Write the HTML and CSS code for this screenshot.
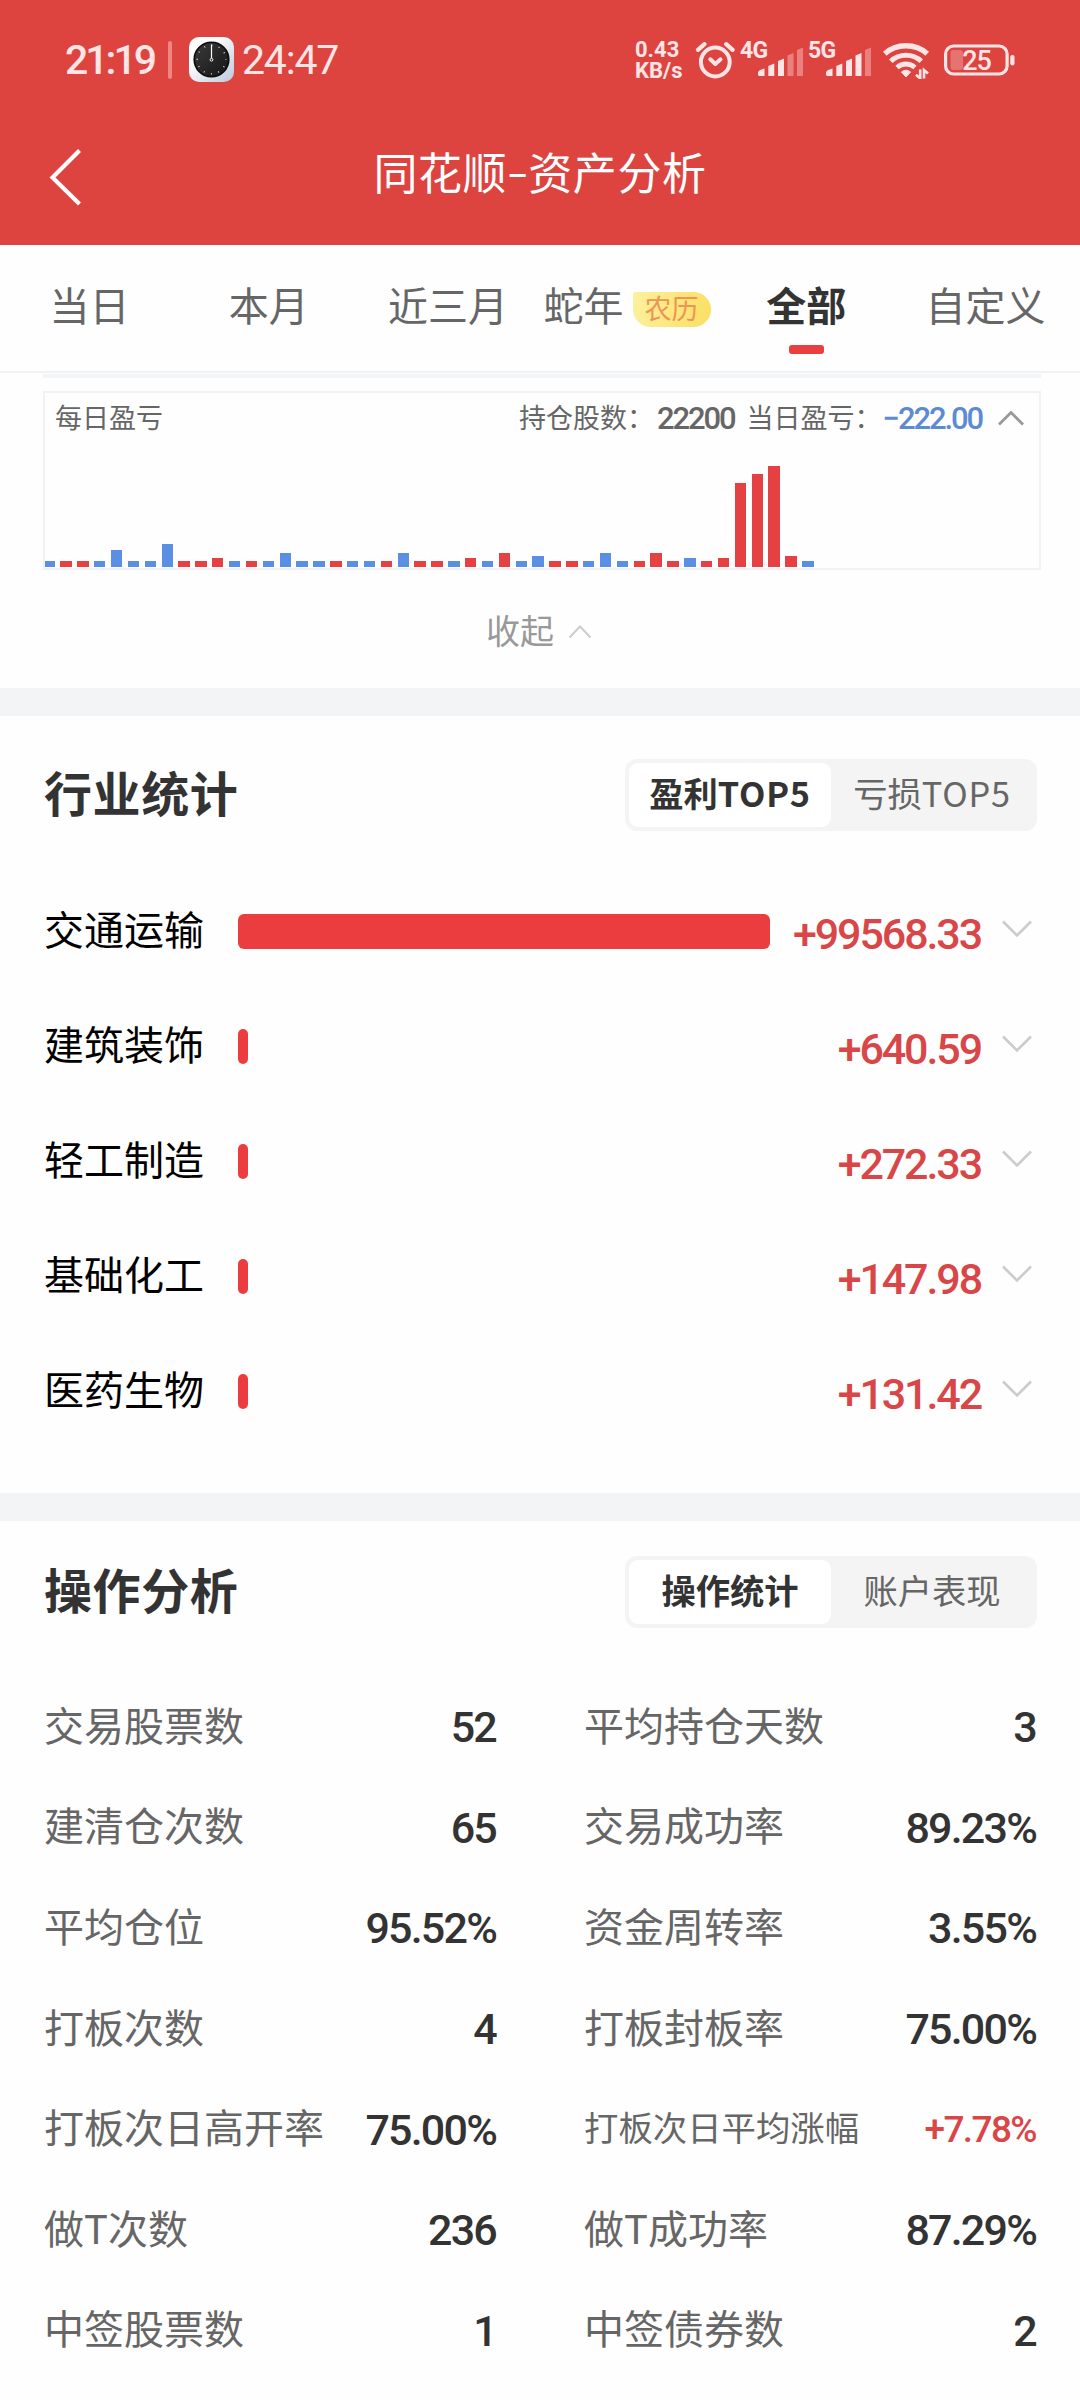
FILE: index.html
```html
<!DOCTYPE html>
<html lang="zh-CN">
<head>
<meta charset="utf-8">
<title>同花顺-资产分析</title>
<link rel="stylesheet" href="styles.css">
</head>
<body>
<header class="header">
  <div class="status">
    <div class="status-left">
      <span class="clock">21:19</span>
      <span class="divider"></span>
      <svg class="app-icon" width="45" height="45" viewBox="0 0 45 45">
        <defs>
          <linearGradient id="tile" x1="0" y1="0" x2="1" y2="1"><stop offset=".3" stop-color="#fff"/><stop offset="1" stop-color="#bcc8da"/></linearGradient>
          <linearGradient id="dial" x1="0" y1="0" x2="1" y2="1"><stop offset="0" stop-color="#3a3a3a"/><stop offset="1" stop-color="#161616"/></linearGradient>
        </defs>
        <rect width="45" height="45" rx="10" fill="url(#tile)"/>
        <circle cx="22.5" cy="22.5" r="17.3" fill="url(#dial)" stroke="#0c0c0c" stroke-width="1.6"/>
        <circle cx="22.5" cy="22.5" r="14.3" fill="none" stroke="#ddd" stroke-width="1.6" stroke-dasharray="0.9 6.588" stroke-dashoffset="0.45"/>
        <path d="M22.5 21.5V7.5" stroke="#fff" stroke-width="1.2"/>
        <circle cx="22.5" cy="22.7" r="1.4" fill="#222" stroke="#fff" stroke-width="1"/>
      </svg>
      <span class="timer">24:47</span>
    </div>
    <div class="status-right">
      <div class="speed"><span>0.43</span><span>KB/s</span></div>
      <svg class="alarm" width="40" height="40" viewBox="0 0 40 40" fill="none" stroke="#ffe5e5" stroke-linecap="round" stroke-linejoin="round">
        <circle cx="20.3" cy="22" r="14.4" stroke-width="4"/>
        <path d="M15.3 19.3L20.3 24L25.5 19.3" stroke-width="4"/>
        <path d="M3 9.8L9.4 4.2M31.2 4.2L37.6 9.8" stroke-width="4.2"/>
      </svg>
      <div class="cell">
        <span class="net">4G</span>
        <svg class="signal" width="46" height="30" viewBox="0 0 46 30" fill="#ffe5e5"><path d="M0 25L2 23L6.5 21.5V29H1L0 28ZM10.3 19L16.3 16.5V29H10.3ZM20 14L26 11.5V29H20Z"/><path opacity=".38" d="M29.5 8.5L35.5 6V29H29.5ZM39 3L45 .5V29H39Z"/></svg>
      </div>
      <div class="cell">
        <span class="net">5G</span>
        <svg class="signal" width="46" height="30" viewBox="0 0 46 30" fill="#ffe5e5"><path d="M0 25L2 23L6.5 21.5V29H1L0 28ZM10.3 19L16.3 16.5V29H10.3ZM20 14L26 11.5V29H20ZM29.5 8.5L35.5 6V29H29.5Z"/><path opacity=".38" d="M39 3L45 .5V29H39Z"/></svg>
      </div>
      <svg class="wifi" width="47" height="38" viewBox="0 0 47 38" fill="none" stroke="#ffe5e5">
        <path d="M1.8 12.8Q10.5 4.8 23 4.8T44.2 12.8" stroke-width="5.4"/>
        <path d="M7.8 20.2Q14 14.2 23 14.2T38.2 20.2" stroke-width="5"/>
        <path d="M14 26.5Q18 23 23 23T32 26.5" stroke-width="4.8"/>
        <path d="M18.4 31Q23 27.4 27.6 31L23 36Z" fill="#ffe5e5"  stroke-width="1" stroke-linejoin="round"/>
        <path d="M37.2 28.5V37.5L33 33.8M41 37.5V29L45 32.5" stroke-width="2.6"/>
      </svg>
      <svg class="battery" width="71" height="32" viewBox="0 0 71 32">
        <rect x="1.6" y="2" width="61.5" height="28" rx="8" fill="none" stroke="#ffe5e5" stroke-width="3.2"/>
        <rect x="66.3" y="11" width="4.2" height="10.5" rx="2" fill="#ffe5e5"/>
        <rect x="6.5" y="6" width="12.5" height="20" rx="3" fill="#fff" opacity=".25"/>
        <text x="32.5" y="25.5" text-anchor="middle" class="battery-text">25</text>
      </svg>
    </div>
  </div>
  <div class="title-bar">
    <svg class="back" width="34" height="58" viewBox="0 0 34 58"><path d="M30.5 2.5L3.5 29.5L30.5 56" fill="none" stroke="#fff" stroke-width="4.2"/></svg>
    <h1 class="title">同花顺<span class="dash">–</span>资产分析</h1>
  </div>
</header>

<nav class="tabs">
  <span class="tab">当日</span>
  <span class="tab">本月</span>
  <span class="tab">近三月</span>
  <span class="tab">蛇年<span class="lunar">农历</span></span>
  <span class="tab active">全部</span>
  <span class="tab">自定义</span>
</nav>

<section class="daily">
  <div class="previous-edge"></div>
  <div class="chart">
    <div class="chart-head">
      <span>每日盈亏</span>
      <div class="chart-info">
        <span>持仓股数：</span><span class="num shares">22200</span>
        <span class="pnl-label">当日盈亏：</span><span class="num pnl">−222.00</span>
        <svg class="caret-up" width="28" height="18" viewBox="0 0 28 18"><path d="M2 15.5L14 3.5L26 15.5" fill="none" stroke="#999" stroke-width="2.8"/></svg>
      </div>
    </div>
    <div class="bars" id="bars"></div>
  </div>
  <div class="collapse"><span>收起</span><svg width="24" height="16" viewBox="0 0 24 16"><path d="M1.5 13.5L12 2.5L22.5 13.5" fill="none" stroke="#ccc" stroke-width="2"/></svg></div>
</section>

<section class="industry">
  <div class="section-head">
    <h2>行业统计</h2>
    <div class="segment"><span class="on">盈利<span class="latin">TOP5</span></span><span>亏损<span class="latin">TOP5</span></span></div>
  </div>
  <div class="ranking" id="ranking"></div>
</section>

<section class="operation">
  <div class="section-head">
    <h2>操作分析</h2>
    <div class="segment"><span class="on">操作统计</span><span>账户表现</span></div>
  </div>
  <div class="stats">
    <div class="stat"><span>交易股票数</span><b>52</b></div>
    <div class="stat"><span>平均持仓天数</span><b>3</b></div>
    <div class="stat"><span>建清仓次数</span><b>65</b></div>
    <div class="stat"><span>交易成功率</span><b>89.23%</b></div>
    <div class="stat"><span>平均仓位</span><b>95.52%</b></div>
    <div class="stat"><span>资金周转率</span><b>3.55%</b></div>
    <div class="stat"><span>打板次数</span><b>4</b></div>
    <div class="stat"><span>打板封板率</span><b>75.00%</b></div>
    <div class="stat"><span>打板次日高开率</span><b>75.00%</b></div>
    <div class="stat compact"><span>打板次日平均涨幅</span><b>+7.78%</b></div>
    <div class="stat"><span>做T次数</span><b>236</b></div>
    <div class="stat"><span>做T成功率</span><b>87.29%</b></div>
    <div class="stat"><span>中签股票数</span><b>1</b></div>
    <div class="stat"><span>中签债券数</span><b>2</b></div>
  </div>
</section>
<script src="app.js"></script>
</body>
</html>
```
FILE: styles.css
```css
* { box-sizing: border-box; }
body {
  margin: 0;
  width: 1080px;
  height: 2400px;
  overflow: hidden;
  background: #fefefe;
  color: #666;
  font-family: "Noto Sans CJK SC", sans-serif;
}
h1, h2 { margin: 0; }
svg { display: block; flex: none; }

.header { height: 245px; background: #dd4440; color: #fff; }
.status {
  height: 119px;
  padding: 0 65px 0 65px;
  display: flex;
  justify-content: space-between;
  align-items: center;
  color: #ffe5e5;
  font-family: Roboto, sans-serif;
}
.status-left { display: flex; align-items: center; }
.clock { width: 103px; font-size: 41px; font-weight: 500; letter-spacing: -3px; line-height: 48px; }
.divider { width: 4px; height: 38px; background: #ee8684; margin-right: 17px; border-radius: 2px; }
.timer { margin-left: 8px; font-size: 41px; letter-spacing: -1.2px; line-height: 48px; }
.status-right { display: flex; align-items: center; }
.speed { display: flex; flex-direction: column; width: 60px; font-size: 22px; font-weight: 700; line-height: 21px; }
.cell { position: relative; width: 68px; height: 38px; }
.net { display: block; font-size: 23px; line-height: 20px; font-weight: 700; letter-spacing: -.6px; margin-left: 5px; }
.signal { position: absolute; left: 23px; top: 6px; }
.wifi { margin-left: 12px; }
.battery { margin-left: 14px; }
.battery-text { font: 500 27px Roboto, sans-serif; fill: #ffe5e5; letter-spacing: -1px; }

.title-bar { display: grid; grid-template-columns: 100px 1fr 100px; align-items: center; height: 114px; }
.back { margin-left: 49px; margin-top: 1px; }
.title { text-align: center; font-size: 44px; font-weight: 400; line-height: 64px; letter-spacing: .6px; margin-top: -11px; }
.dash { display: inline-block; width: 21px; text-align: center; font: 500 32px/32px Roboto, sans-serif; vertical-align: 3px; }

.tabs {
  height: 128px;
  padding-right: 5px;
  display: grid;
  grid-template-columns: repeat(6, 1fr);
  border-bottom: 2px solid #f1f2f3;
  font-size: 40px;
  line-height: 119px;
  text-align: center;
}
.tab { display: flex; justify-content: center; align-items: center; height: 119px; position: relative; white-space: nowrap; }
.tab.active { color: #333; font-weight: 700; }
.tab.active::after { content: ""; position: absolute; left: 50%; top: 100px; width: 35px; height: 9px; margin-left: -17px; border-radius: 3px; background: #e93f41; }
.lunar {
  width: 78px; height: 35px; margin: 10px 0 0 9px;
  border-radius: 3px 18px 18px 18px;
  background: linear-gradient(100deg, #fdf19f, #fbdf62);
  color: #ee9457; font-size: 27px; line-height: 32px;
}

.daily { height: 315px; padding: 1px 39px 0 43px; }
.previous-edge { height: 4px; background: #f3f4f5; }
.chart { height: 179px; margin-top: 13px; border: 2px solid #f0f3f5; display: flex; flex-direction: column; justify-content: space-between; }
.chart-head { display: flex; justify-content: space-between; align-items: center; height: 47px; padding: 0 14px 0 10px; font-size: 27px; }
.chart-info { display: flex; align-items: center; }
.num { font-family: Roboto, sans-serif; font-weight: 500; font-size: 31px; letter-spacing: -2.1px; margin-top: 3px; }
.shares { margin-left: 3px; margin-right: 12px; }
.pnl { color: #5c8bd4; margin-left: 1px; margin-right: 15px; }
.pnl-label { margin-right: 0; }
.caret-up { margin-top: 2px; }
.bars { display: flex; align-items: flex-end; gap: 5.475px; height: 110px; overflow: hidden; margin-bottom: 1px; }
.bars i { width: 11.4px; flex: none; background: #5b8fe3; }
.bars i:first-child { width: 9.9px; }
.bars i.up { background: #e54143; }
.collapse { display: flex; justify-content: center; align-items: center; gap: 14px; height: 118px; font-size: 34px; color: #999; padding-right: 6px; }
.collapse svg { margin-top: 5px; }

.industry, .operation { border-top: 28px solid #f3f4f6; }
.industry { height: 805px; }
.section-head { display: flex; justify-content: space-between; align-items: center; padding: 0 43px 0 44px; margin-top: 43px; height: 72px; }
.operation .section-head { margin-top: 35px; }
h2 { font-size: 48px; font-weight: 700; color: #333; line-height: 60px; letter-spacing: .6px; margin-top: -8px; }
.segment { display: grid; grid-template-columns: 202px 202px; width: 412px; height: 72px; padding: 4px 0 4px 4px; border-radius: 12px; background: #f4f4f4; font-size: 34.3px; line-height: 58px; text-align: center; }
.segment .on { background: #fff; border-radius: 9px; color: #333; font-weight: 700; }
.latin { letter-spacing: .8px; }

.ranking { padding: 43px 43px 0 44px; }
.rank { height: 115.1px; display: grid; grid-template-columns: 194px 532px 1fr 55px; align-items: center; }
.rank-name { color: #000; font-size: 40px; line-height: 60px; margin-top: -7px; white-space: nowrap; }
.rank-bar { height: 35px; border-radius: 6px; background: #eb3d40; }
.rank-value { justify-self: end; color: #d94648; font: 500 43px/50px Roboto, sans-serif; letter-spacing: -2.1px; margin: 5px 1px 0 0; }
.rank svg { justify-self: end; margin: -6px 4px 0 0; }

.stats { display: grid; grid-template-columns: 452px 452px; column-gap: 88px; padding: 48px 43px 0 44px; }
.stat { height: 100.6px; display: flex; justify-content: space-between; align-items: center; font-size: 40px; line-height: 60px; white-space: nowrap; }
.stat span { margin-top: -5px; }
.stat b { font: 500 43px/50px Roboto, sans-serif; letter-spacing: -1.8px; color: #333; margin: 2px 0 0 0; }
.stat.compact { font-size: 34.4px; }
.stat.compact b { font-size: 37px; letter-spacing: -1.6px; color: #d94648; }
```
FILE: app.js
```js
// Daily profit/loss: [height in px, 1 = gain / 0 = loss]
const days = [
  [6,0],[6,1],[6,1],[6,0],[17,0],[6,0],[6,0],[23,0],[6,1],[6,1],[9,1],[6,0],
  [6,1],[6,0],[14,0],[6,0],[6,0],[6,1],[6,0],[6,0],[6,1],[14,0],[6,1],[6,1],
  [6,0],[9,1],[6,0],[14,1],[6,0],[11,0],[6,1],[6,1],[6,0],[14,0],[6,0],[6,1],
  [14,1],[6,1],[9,0],[6,1],[9,1],[84,1],[93,1],[101,1],[11,1],[6,0]
];
document.getElementById("bars").innerHTML = days
  .map(([h, up]) => `<i class="${up ? "up" : ""}" style="height:${h}px"></i>`)
  .join("");

const industries = [
  ["交通运输", 100, "+99568.33"],
  ["建筑装饰", 1.9, "+640.59"],
  ["轻工制造", 1.9, "+272.33"],
  ["基础化工", 1.9, "+147.98"],
  ["医药生物", 1.9, "+131.42"]
];
document.getElementById("ranking").innerHTML = industries
  .map(([name, share, value]) => `
    <div class="rank">
      <span class="rank-name">${name}</span>
      <span class="rank-bar" style="width:${share}%"></span>
      <span class="rank-value">${value}</span>
      <svg width="32" height="20" viewBox="0 0 32 20"><path d="M2 2.5L16 16.5L30 2.5" fill="none" stroke="#ccc" stroke-width="2.6"/></svg>
    </div>`)
  .join("");
```
